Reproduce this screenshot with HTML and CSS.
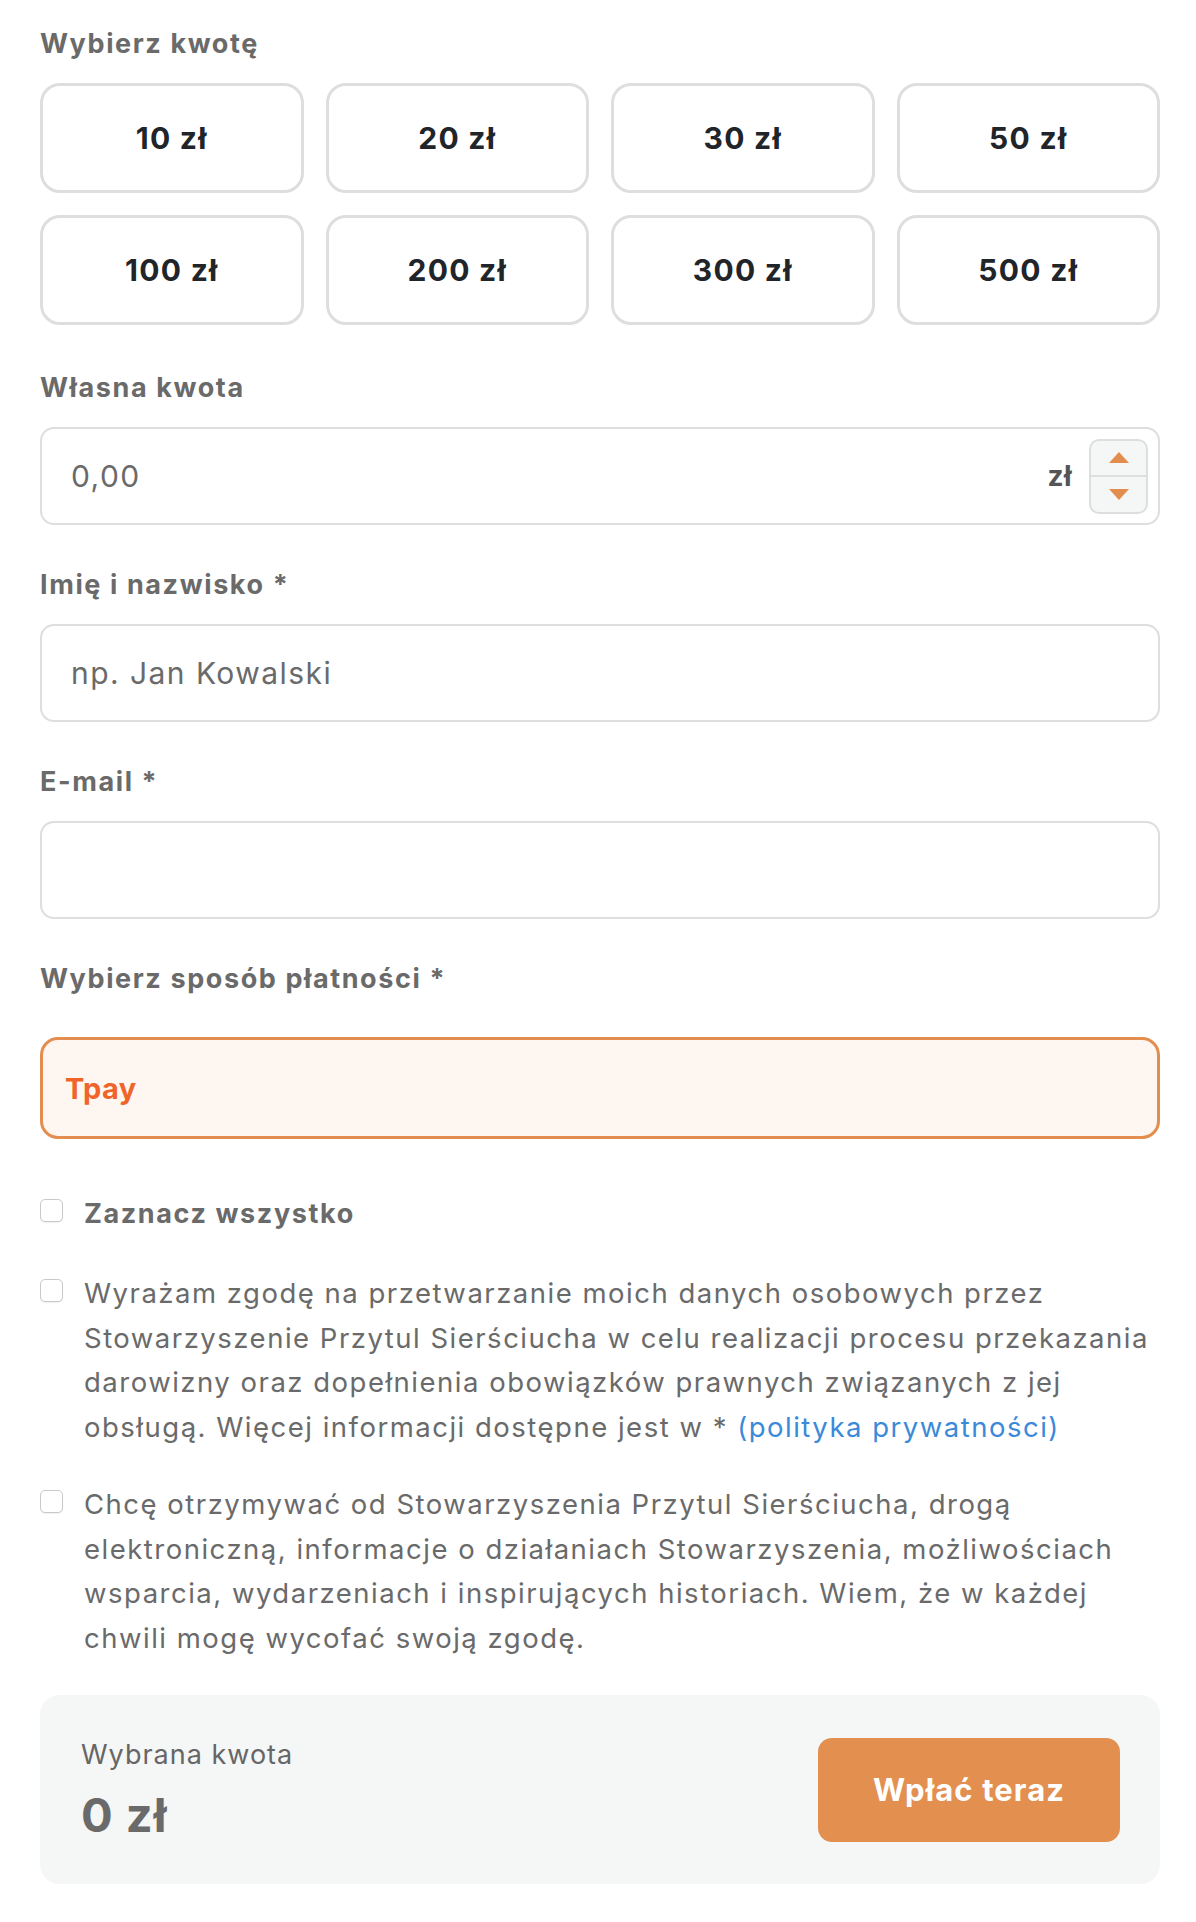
FILE: index.html
```html
<!DOCTYPE html>
<html lang="pl">
<head>
<meta charset="utf-8">
<title>Wpłata</title>
<link rel="stylesheet" href="styles.css">
</head>
<body>
<form class="donate">
  <div class="label">Wybierz kwotę</div>
  <div class="amounts">
    <div class="amount">10 zł</div>
    <div class="amount">20 zł</div>
    <div class="amount">30 zł</div>
    <div class="amount">50 zł</div>
    <div class="amount">100 zł</div>
    <div class="amount">200 zł</div>
    <div class="amount">300 zł</div>
    <div class="amount">500 zł</div>
  </div>

  <div class="label label-first">Własna kwota</div>
  <div class="field">
    <span class="placeholder">0,00</span>
    <span class="currency">zł</span>
    <span class="spinner">
      <span class="spin spin-up"><span class="tri tri-up"></span></span>
      <span class="spin"><span class="tri tri-down"></span></span>
    </span>
  </div>

  <div class="label">Imię i nazwisko *</div>
  <div class="field"><span class="placeholder">np. Jan Kowalski</span></div>

  <div class="label">E-mail *</div>
  <div class="field"></div>

  <div class="label">Wybierz sposób płatności *</div>
  <div class="method">Tpay</div>

  <div class="check-row check-all">
    <span class="checkbox"></span>
    <span class="check-text strong">Zaznacz wszystko</span>
  </div>

  <div class="check-row consent">
    <span class="checkbox"></span>
    <span class="check-text">Wyrażam zgodę na przetwarzanie moich danych osobowych przez Stowarzyszenie Przytul Sierściucha w celu realizacji procesu przekazania darowizny oraz dopełnienia obowiązków prawnych związanych z jej obsługą. Więcej informacji dostępne jest w * <a class="link" href="#">(polityka prywatności)</a></span>
  </div>

  <div class="check-row consent">
    <span class="checkbox"></span>
    <span class="check-text">Chcę otrzymywać od Stowarzyszenia Przytul Sierściucha, drogą elektroniczną, informacje o działaniach Stowarzyszenia, możliwościach wsparcia, wydarzeniach i inspirujących historiach. Wiem, że w każdej chwili mogę wycofać swoją zgodę.</span>
  </div>

  <div class="summary">
    <div class="summary-info">
      <div class="summary-label">Wybrana kwota</div>
      <div class="summary-value">0 zł</div>
    </div>
    <div class="pay-btn">Wpłać teraz</div>
  </div>
</form>
</body>
</html>
```
FILE: styles.css
```css
* { box-sizing: border-box; }

body {
  margin: 0;
  background: #ffffff;
  font-family: Inter, "Open Sans", sans-serif;
  color: #666666;
}

.donate {
  padding: 28px 36px 0 40px;
}

.label {
  font-weight: 700;
  font-size: 27px;
  line-height: 32px;
  letter-spacing: 1.6px;
  color: #6a6a6a;
  margin-top: 44px;
}

.donate > .label:first-child { margin-top: 0; }
.label.label-first { margin-top: 47px; }

.amounts {
  display: grid;
  grid-template-columns: repeat(4, 1fr);
  gap: 22px;
  margin-top: 23px;
}

.amount {
  height: 110px;
  border: 3px solid #dedede;
  border-radius: 20px;
  display: flex;
  align-items: center;
  justify-content: center;
  font-weight: 700;
  font-size: 30px;
  letter-spacing: 1.3px;
  color: #212529;
}

.field {
  margin-top: 23px;
  height: 98px;
  border: 2px solid #dedede;
  border-radius: 14px;
  display: flex;
  align-items: center;
  padding: 0 10px 0 29px;
  font-size: 30px;
  letter-spacing: 1.45px;
  color: #6a6a6a;
}

.currency {
  margin-left: auto;
  font-weight: 700;
  font-size: 28px;
  letter-spacing: 0.5px;
  color: #555555;
}

.spinner {
  margin-left: 17px;
  width: 59px;
  height: 75px;
  border: 2px solid #dedede;
  border-radius: 10px;
  background: #f5f6f6;
  display: flex;
  flex-direction: column;
  overflow: hidden;
}

.spin {
  flex: 1;
  display: flex;
  align-items: center;
  justify-content: center;
}

.spin-up { border-bottom: 2px solid #dedede; }

.tri {
  width: 0;
  height: 0;
  border-left: 10px solid transparent;
  border-right: 10px solid transparent;
}

.tri-up { border-bottom: 11px solid #e38e4f; }
.tri-down { border-top: 11px solid #e38e4f; }

.method {
  margin-top: 42px;
  height: 102px;
  border: 3px solid #e38e4f;
  border-radius: 18px;
  background: #fef6f1;
  display: flex;
  align-items: center;
  padding-left: 22px;
  font-weight: 700;
  font-size: 29px;
  letter-spacing: 0.4px;
  color: #f0642a;
}

.check-row {
  display: flex;
  align-items: flex-start;
  gap: 21px;
}

.checkbox {
  flex: 0 0 23px;
  width: 23px;
  height: 23px;
  margin-top: 8px;
  border: 1px solid #c9c9c9;
  border-radius: 5px;
  background: #ffffff;
  box-shadow: 0 1px 1px rgba(0, 0, 0, 0.06);
}

.check-all {
  margin-top: 53px;
}

.check-all .checkbox { margin-top: 7px; }

.check-text {
  font-size: 27.5px;
  line-height: 44.5px;
  letter-spacing: 1.5px;
  color: #6a6a6a;
}

.check-text.strong {
  font-weight: 700;
  font-size: 27px;
  line-height: 44px;
  letter-spacing: 1.6px;
}

.consent { margin-top: 35px; }
.consent + .consent { margin-top: 33px; }

.link {
  color: #3b8ad9;
  text-decoration: none;
}

.summary {
  margin-top: 35px;
  height: 189px;
  border-radius: 20px;
  background: #f5f6f6;
  display: flex;
  align-items: center;
  justify-content: space-between;
  padding: 0 40px 0 41px;
}

.summary-label {
  font-size: 27px;
  line-height: 36px;
  letter-spacing: 1px;
  color: #666666;
}

.summary-value {
  margin-top: 14px;
  font-weight: 700;
  font-size: 47px;
  line-height: 56px;
  letter-spacing: 1px;
  color: #6a6a6a;
}

.pay-btn {
  width: 302px;
  height: 104px;
  border-radius: 14px;
  background: #e38f50;
  color: #ffffff;
  font-weight: 700;
  font-size: 31px;
  letter-spacing: 1.1px;
  display: flex;
  align-items: center;
  justify-content: center;
}
```
